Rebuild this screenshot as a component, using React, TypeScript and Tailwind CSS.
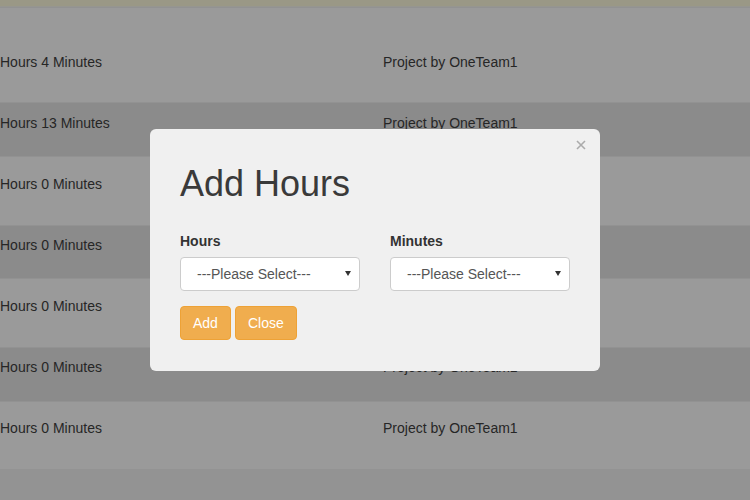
const ROWS = [
  { hours: "Hours 4 Minutes", h: "h-[95px]", pt: "pt-[44px]", bg: "bg-[#9a9a9a]" },
  { hours: "Hours 13 Minutes", h: "h-[54px]", pt: "pt-[10px]", bg: "bg-[#8b8b8b]" },
  { hours: "Hours 0 Minutes", h: "h-[69px]", pt: "pt-[17px]", bg: "bg-[#9a9a9a]" },
  { hours: "Hours 0 Minutes", h: "h-[53px]", pt: "pt-[9px]", bg: "bg-[#8b8b8b]" },
  { hours: "Hours 0 Minutes", h: "h-[69px]", pt: "pt-[17px]", bg: "bg-[#9a9a9a]" },
  { hours: "Hours 0 Minutes", h: "h-[54px]", pt: "pt-[9px]", bg: "bg-[#8b8b8b]" },
  { hours: "Hours 0 Minutes", h: "h-[68px]", pt: "pt-[16px]", bg: "bg-[#9a9a9a]" },
];

function FakeSelect() {
  return (
    <div className="relative h-[34px] w-[180px] rounded-[4px] border border-[#cccccc] bg-white pl-[16px] text-[14px] leading-[32px] text-[#555555]">
      ---Please Select---
      <svg
        className="absolute right-[8px] top-[13px]"
        width="6"
        height="5"
        viewBox="0 0 6 5"
      >
        <path d="M0 0 L6 0 L3 5 Z" fill="#333333" />
      </svg>
    </div>
  );
}

export default function App() {
  return (
    <div className="relative h-[500px] w-[750px] overflow-hidden bg-[#939393] font-['Liberation_Sans',Arial,sans-serif]">
      <div className="h-[6px] bg-[#9a9886]" />
      <div className="h-px bg-[#969690]" />
      {ROWS.map((row, i) => (
        <div
          key={i}
          className={`grid grid-cols-[383px_1fr] border-t border-[#929292] text-[14px] leading-[20px] text-[#262626] ${row.h} ${row.pt} ${row.bg}`}
        >
          <span>{row.hours}</span>
          <span>Project by OneTeam1</span>
        </div>
      ))}

      <div className="absolute left-[150px] top-[129px] w-[450px] rounded-[6px] bg-[#f0f0f0] px-[30px] pb-[31px] pt-[35px] text-[#333333]">
        <svg
          className="absolute right-[14px] top-[11px]"
          width="10"
          height="10"
          viewBox="0 0 10 10"
        >
          <path d="M1 1 L9 9 M9 1 L1 9" stroke="#ababab" strokeWidth="1.6" />
        </svg>
        <h1 className="text-[36px] leading-[40px] font-normal text-[#3a3a3a]">Add Hours</h1>
        <div className="mt-[27px] grid grid-cols-2 gap-[30px]">
          <div className="flex flex-col gap-[6px]">
            <label className="text-[14px] font-bold leading-[20px]">Hours</label>
            <FakeSelect />
          </div>
          <div className="flex flex-col gap-[6px]">
            <label className="text-[14px] font-bold leading-[20px]">Minutes</label>
            <FakeSelect />
          </div>
        </div>
        <div className="mt-[15px] flex gap-[4px]">
          <button className="h-[34px] rounded-[4px] border border-[#eea236] bg-[#f0ad4e] px-[12px] text-[14px] text-white">
            Add
          </button>
          <button className="h-[34px] rounded-[4px] border border-[#eea236] bg-[#f0ad4e] px-[12px] text-[14px] text-white">
            Close
          </button>
        </div>
      </div>
    </div>
  );
}
